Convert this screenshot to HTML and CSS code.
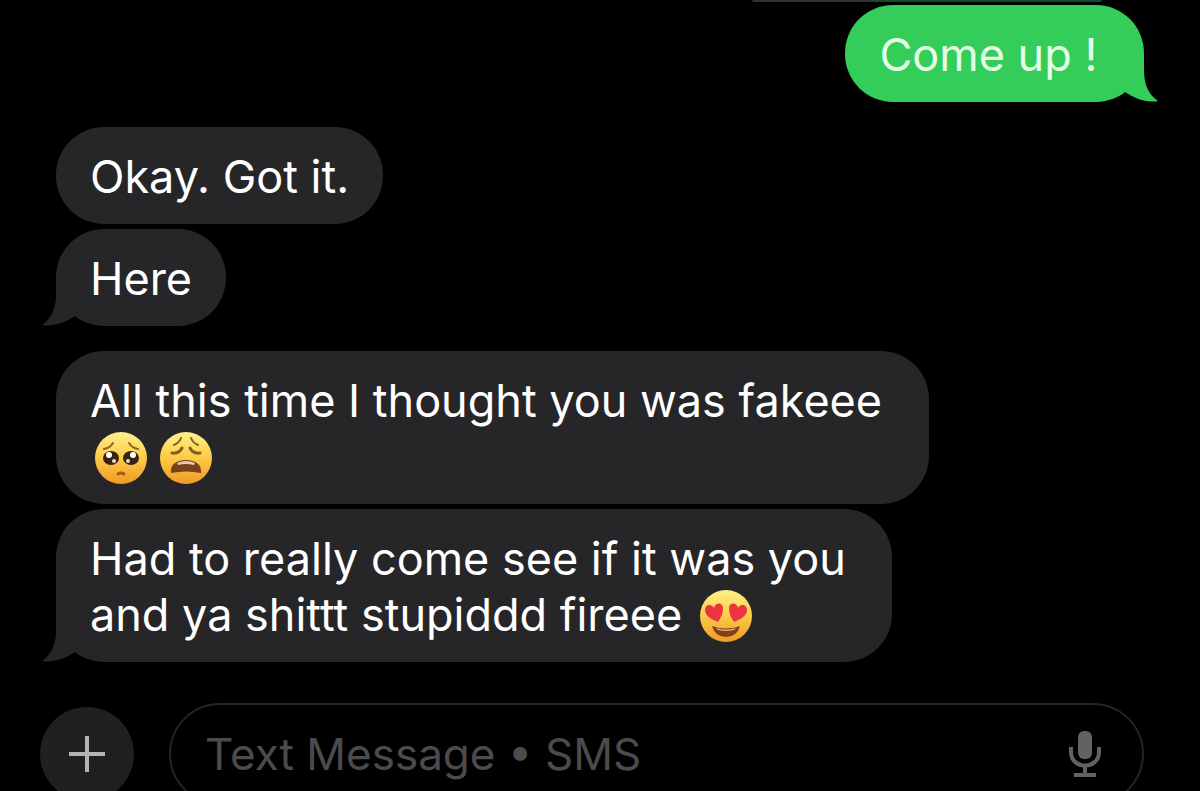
FILE: index.html
```html
<!DOCTYPE html>
<html lang="en">
<head>
    <meta charset="UTF-8">
    <meta name="viewport" content="width=device-width, initial-scale=1">
    <title>Messages</title>
    <link rel="stylesheet" href="styles.css">
</head>
<body>
    <!-- Shared gradient for the emoji faces -->
    <svg class="defs" width="0" height="0" aria-hidden="true">
        <defs>
            <linearGradient id="face" x1="0" y1="0" x2="0" y2="1">
                <stop offset="0" stop-color="#fff08a"/>
                <stop offset="0.5" stop-color="#fdcb45"/>
                <stop offset="1" stop-color="#ee9a26"/>
            </linearGradient>
        </defs>
    </svg>

    <main class="chat">
        <div class="previous"></div>

        <div class="group sent">
            <p class="bubble">Come up !&nbsp;<svg class="tail-shape" viewBox="0 0 42 50" aria-hidden="true"><path d="M28 0V18C28 32 32 42 42 49C30 51 20 47 9 40L0 30Z"/></svg></p>
        </div>

        <div class="group received">
            <p class="bubble">Okay. Got it.</p>
            <p class="bubble">Here<svg class="tail-shape" viewBox="0 0 42 50" aria-hidden="true"><path d="M28 0V18C28 32 32 42 42 49C30 51 20 47 9 40L0 30Z"/></svg></p>
        </div>

        <div class="group received">
            <p class="bubble">All this time I thought you was fakeee&nbsp;<br><svg class="emoji" viewBox="0 0 54 54" role="img" aria-label="Pleading face">
                    <circle cx="27" cy="27" r="26" fill="url(#face)"/>
                    <path d="M10 18Q16 17 19 12M44 18Q38 17 35 12" fill="none" stroke="#8a6420" stroke-width="2" stroke-linecap="round"/>
                    <ellipse cx="17" cy="27" rx="8" ry="7" fill="#3a2212"/>
                    <ellipse cx="37" cy="27" rx="8" ry="7" fill="#3a2212"/>
                    <circle cx="15" cy="24" r="3" fill="#fff"/>
                    <circle cx="39" cy="24" r="3" fill="#fff"/>
                    <circle cx="20" cy="30" r="2" fill="#e9dcc8"/>
                    <circle cx="34" cy="30" r="2" fill="#e9dcc8"/>
                    <path d="M24 43Q27 41 30 43" fill="none" stroke="#b8501c" stroke-width="3" stroke-linecap="round"/>
                </svg><svg class="emoji" viewBox="0 0 54 54" role="img" aria-label="Weary face">
                    <circle cx="27" cy="27" r="26" fill="url(#face)"/>
                    <path d="M15 14Q20 12 22 7M39 14Q34 12 32 7" fill="none" stroke="#80601c" stroke-width="2" stroke-linecap="round"/>
                    <path d="M13 22Q20 23 23 17M41 22Q34 23 31 17" fill="none" stroke="#80601c" stroke-width="3" stroke-linecap="round"/>
                    <path d="M12 42C11 34 17 29 27 29C37 29 43 34 42 42Q27 39 12 42Z" fill="#79401a"/>
                    <path d="M18 32Q27 28 36 32L35 34Q27 32 19 34Z" fill="#e9c9ae"/>
                </svg></p>
            <p class="bubble">Had to really come see if it was you&nbsp;<br>and ya shittt stupiddd fireee <svg class="emoji" viewBox="0 0 54 54" role="img" aria-label="Smiling face with heart eyes">
                    <circle cx="27" cy="27" r="26" fill="url(#face)"/>
                    <path d="M19 33C11 30 6 26 6 21C6 16 12 14 15 19C16 13 24 13 24 19C24 24 22 29 19 33Z" fill="#ea3440"/>
                    <path d="M35 33C43 30 48 26 48 21C48 16 42 14 39 19C38 13 30 13 30 19C30 24 32 29 35 33Z" fill="#ea3440"/>
                    <path d="M13 37Q27 42 41 37Q38 48 27 48Q16 48 13 37Z" fill="#80401a"/>
                    <path d="M17 39Q27 42 37 39L35 41Q27 43 19 41Z" fill="#e0b070"/>
                </svg><svg class="tail-shape" viewBox="0 0 42 50" aria-hidden="true"><path d="M28 0V18C28 32 32 42 42 49C30 51 20 47 9 40L0 30Z"/></svg></p>
        </div>

        <form class="composer">
            <button class="add" type="button" aria-label="Add attachment">
                <svg viewBox="0 0 38 38" aria-hidden="true"><path d="M19 1V37M1 19H37"/></svg>
            </button>
            <div class="field">
                <input type="text" aria-label="Message" placeholder="Text Message • SMS">
                <button class="mic" type="button" aria-label="Dictate">
                    <svg viewBox="0 0 32 48" aria-hidden="true">
                        <rect x="9" y="1" width="14" height="28" rx="6" fill="currentColor"/>
                        <path d="M2 17V22C2 40 30 40 30 22V17M16 36V44M5 45H27" fill="none" stroke="currentColor" stroke-width="4"/>
                    </svg>
                </button>
            </div>
        </form>
    </main>
</body>
</html>
```
FILE: styles.css
```css
* {
    box-sizing: border-box;
}
body {
    margin: 0;
    background-color: #000;
    color: #fff;
    font-family: Inter, "Liberation Sans", sans-serif;
    font-size: 45px;
    line-height: 56px;
}
.defs {
    position: absolute;
}
.chat {
    height: 100vh;
    overflow: hidden;
    padding: 0 56px;
}
/* bottom edge of the message scrolled off above */
.previous {
    width: 350px;
    height: 2px;
    margin: 0 42px 3px auto;
    border-radius: 0 0 8px 8px;
    background: linear-gradient(to right, #303032 30%, #174a24 36%);
}
.group {
    display: flex;
    flex-direction: column;
    align-items: flex-start;
    gap: 5px;
    margin-bottom: 25px;
}
.bubble {
    position: relative;
    margin: 0;
    padding: 22px 34px 19px;
    border-radius: 48px;
    background-color: #262628;
}
.sent {
    align-items: flex-end;
}
.sent .bubble {
    background-color: #34cd59;
    color: #e4ffe5;
}
/* little tail on the last bubble of a group */
.tail-shape {
    position: absolute;
    bottom: 0;
    left: -14px;
    width: 42px;
    height: 50px;
    fill: #262628;
    transform: scaleX(-1);
}
.sent .tail-shape {
    left: auto;
    right: -14px;
    fill: #34cd59;
    transform: none;
}
.emoji {
    width: 54px;
    height: 54px;
    margin: -10px 7px -4px 4px;
    vertical-align: middle;
}
.composer {
    display: flex;
    align-items: center;
    gap: 35px;
    margin: 41px 0 0 -16px;
}
.add {
    display: flex;
    flex: none;
    align-items: center;
    justify-content: center;
    width: 94px;
    height: 94px;
    padding: 0;
    border: none;
    border-radius: 50%;
    background-color: #202023;
    cursor: pointer;
}
.add svg {
    width: 38px;
    height: 38px;
    stroke: #b4b4b6;
    stroke-width: 4;
}
.field {
    display: flex;
    flex: 1;
    align-items: center;
    height: 102px;
    padding: 0 41px 0 34px;
    border: 2px solid #242426;
    border-radius: 51px;
}
.field input {
    flex: 1;
    min-width: 0;
    padding: 0;
    border: none;
    outline: none;
    background: none;
    color: #fff;
    font: inherit;
    font-size: 44px;
}
.field input::placeholder {
    color: #4b4b4d;
    opacity: 1;
}
.mic {
    padding: 0;
    border: none;
    background: none;
    color: #626264;
    line-height: 0;
    cursor: pointer;
}
.mic svg {
    width: 32px;
    height: 48px;
}
```
